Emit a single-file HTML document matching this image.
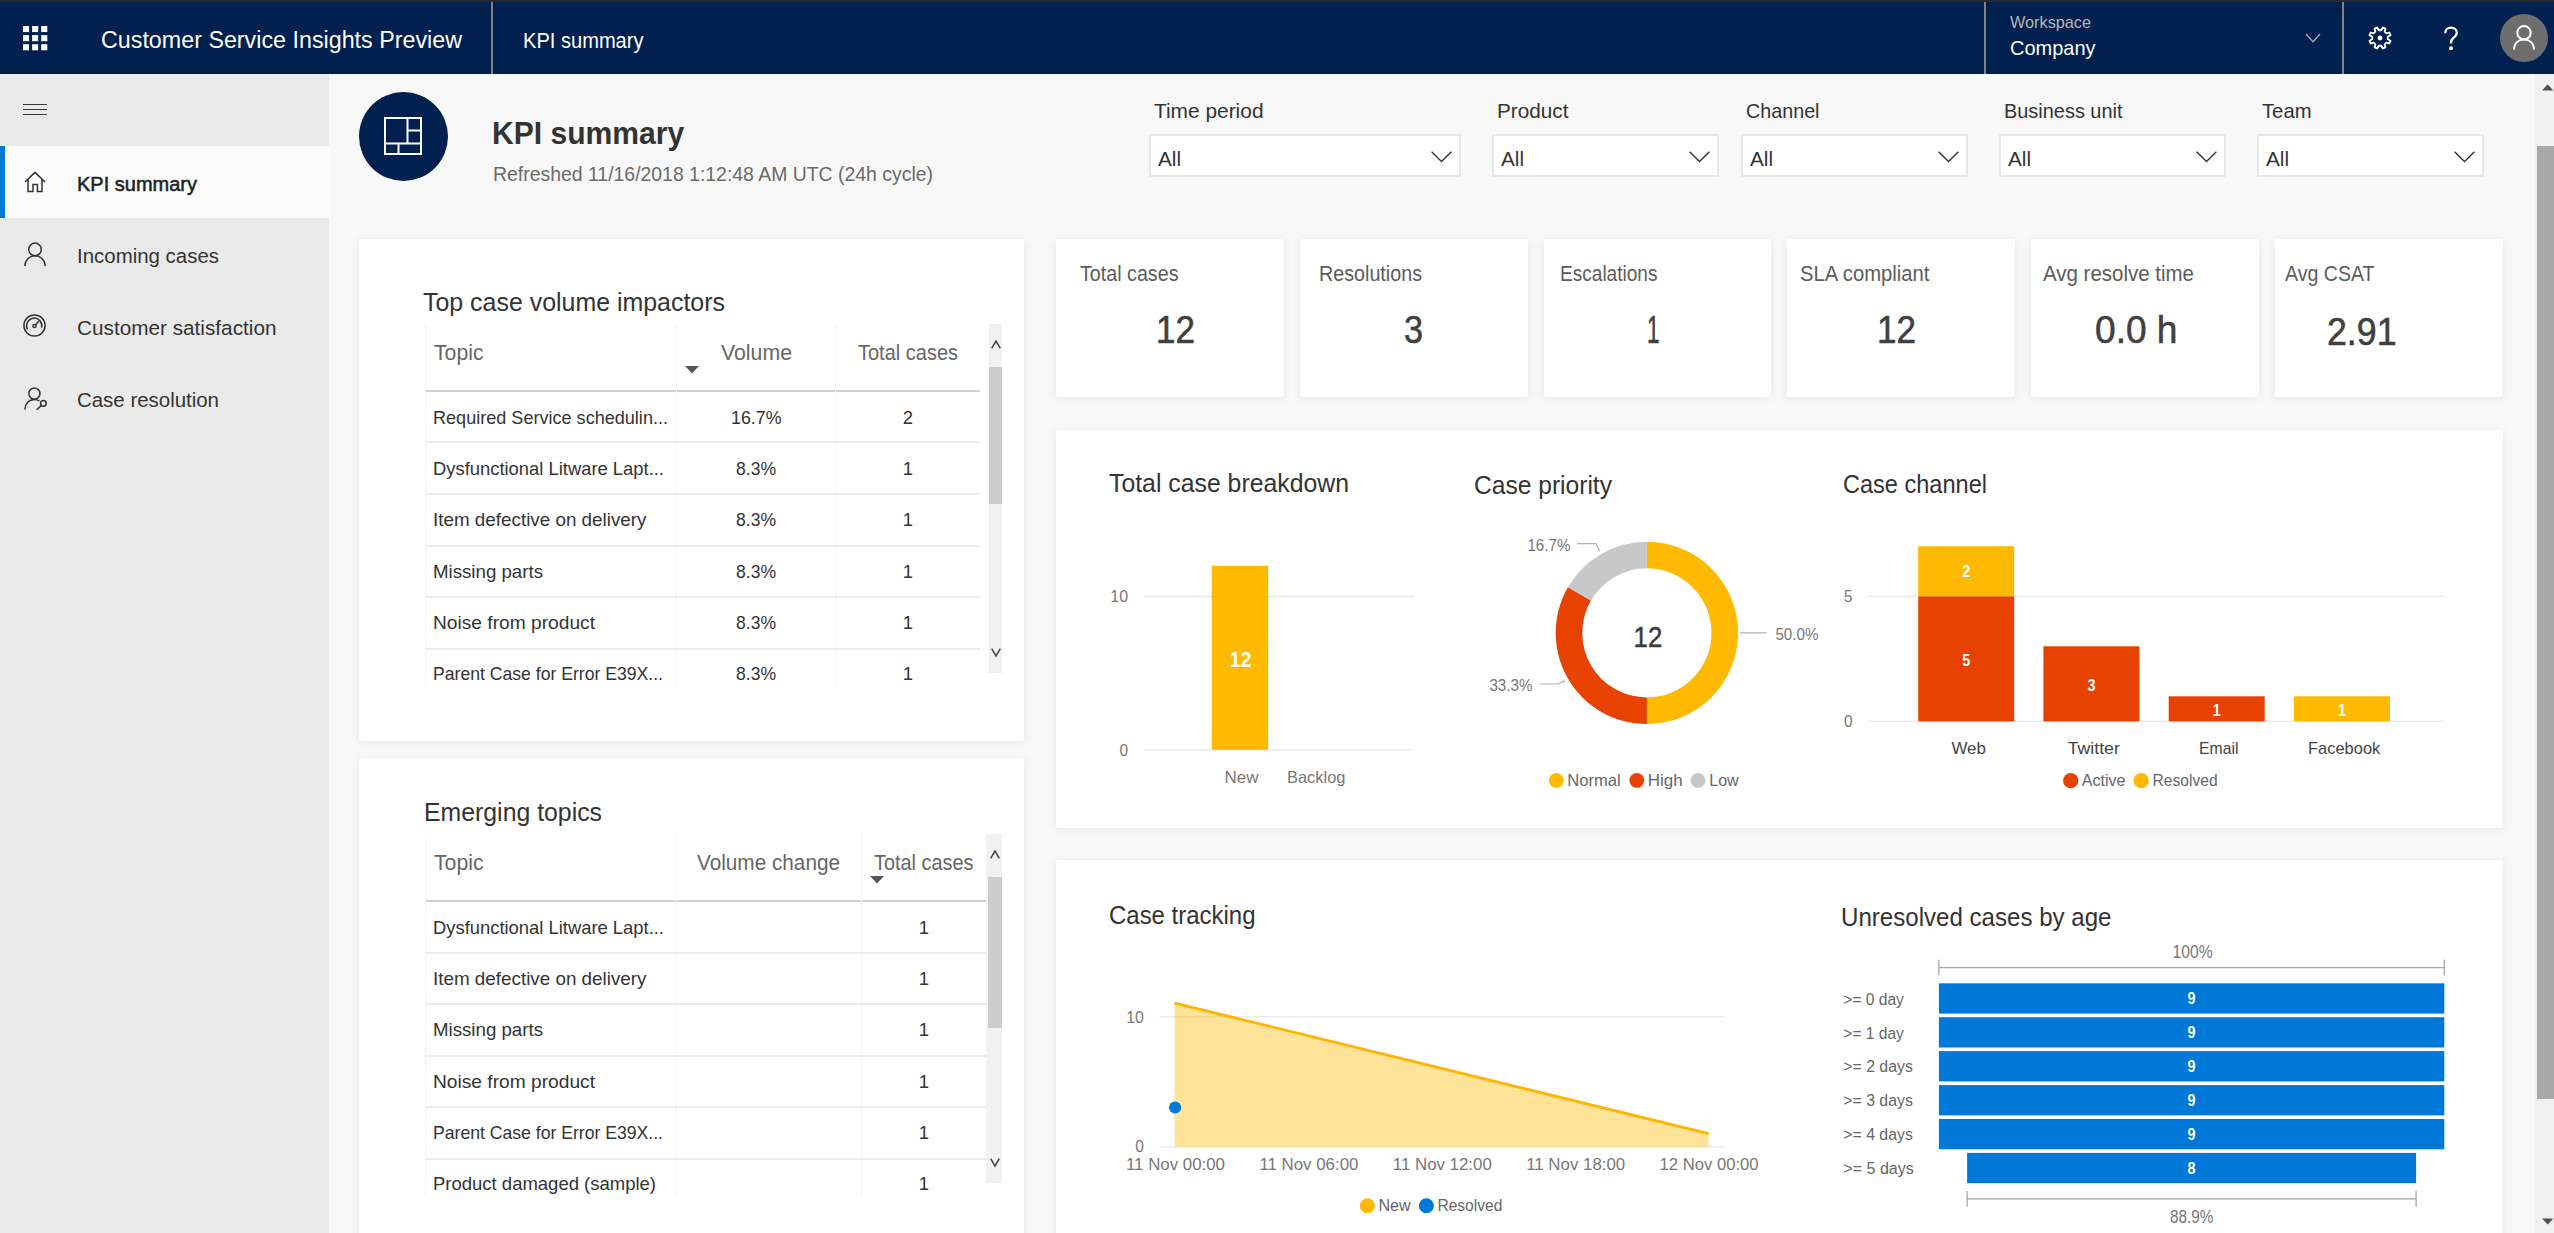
<!DOCTYPE html>
<html lang="en">
<head>
<meta charset="utf-8">
<title>Customer Service Insights Preview - KPI summary</title>
<style>
*{box-sizing:border-box;margin:0;padding:0}
html,body{width:2554px;height:1233px;overflow:hidden;background:#f8f8f8;font-family:"Liberation Sans",sans-serif}
#app{position:relative;width:2554px;height:1233px;overflow:hidden;background:#f8f8f8}
#app div,#app header,#app nav,#app main,#app section,#app svg,#app ul,#app li{position:absolute}
.t{position:absolute;white-space:nowrap;line-height:1;display:inline-block;transform-origin:0 50%;font-weight:400;margin:0}
.card{background:#fff;border-radius:2px;box-shadow:0 1px 9px rgba(0,0,0,.08)}
.dd{background:#fff;border:2px solid #e7e7e7;height:42px}
ul{list-style:none}
svg{overflow:visible}
svg text{font-family:"Liberation Sans",sans-serif}
.hl{background:#ececec}
.vl{background:#f3f3f3;width:1px}

</style>
</head>
<body>
<div id="app">
<main style="left:0;top:0">
<section style="left:0;top:0"><div style="left:359.0px;top:92.0px;width:89.0px;height:89.0px;background:#002050;border-radius:50%"></div>
<svg style="left:383.8px;top:117.0px" width="38" height="38" viewBox="0 0 38 38"><g fill="none" stroke="#fff" stroke-width="2"><rect x="1" y="1" width="36" height="36"/><path d="M1 26.5 H37 M23.5 1 V26.5 M23.5 13.5 H37 M14.5 26.5 V37"/></g></svg>
<h1 class="t" style="left:491.5px;top:118.0px;font-size:30.5px;font-weight:700;color:#333;transform:scaleX(0.9864);">KPI summary</h1>
<span class="t" style="left:493.0px;top:163.0px;font-size:21px;color:#6a6a6a;transform:scaleX(0.9246);">Refreshed 11/16/2018 1:12:48 AM UTC (24h cycle)</span>
<label class="t" style="left:1153.5px;top:100.0px;font-size:21px;color:#333;transform:scaleX(0.9945);">Time period</label>
<div class="dd" style="left:1149.0px;top:134.0px;width:312.0px;height:43.0px;"></div>
<span class="t" style="left:1158.4px;top:148.0px;font-size:21px;color:#333;transform:scaleX(0.9853);">All</span>
<svg style="left:1431.2px;top:151.0px" width="21" height="12" viewBox="0 0 21 12"><path d="M0.6 0.8 L10.5 10.6 L20.4 0.8" fill="none" stroke="#333" stroke-width="1.4"/></svg>
<label class="t" style="left:1497.0px;top:100.0px;font-size:21px;color:#333;transform:scaleX(0.9879);">Product</label>
<div class="dd" style="left:1492.0px;top:134.0px;width:227.0px;height:43.0px;"></div>
<span class="t" style="left:1501.4px;top:148.0px;font-size:21px;color:#333;transform:scaleX(0.9853);">All</span>
<svg style="left:1689.2px;top:151.0px" width="21" height="12" viewBox="0 0 21 12"><path d="M0.6 0.8 L10.5 10.6 L20.4 0.8" fill="none" stroke="#333" stroke-width="1.4"/></svg>
<label class="t" style="left:1746.0px;top:100.0px;font-size:21px;color:#333;transform:scaleX(0.9395);">Channel</label>
<div class="dd" style="left:1741.0px;top:134.0px;width:227.0px;height:43.0px;"></div>
<span class="t" style="left:1750.4px;top:148.0px;font-size:21px;color:#333;transform:scaleX(0.9853);">All</span>
<svg style="left:1938.2px;top:151.0px" width="21" height="12" viewBox="0 0 21 12"><path d="M0.6 0.8 L10.5 10.6 L20.4 0.8" fill="none" stroke="#333" stroke-width="1.4"/></svg>
<label class="t" style="left:2004.2px;top:100.0px;font-size:21px;color:#333;transform:scaleX(0.9487);">Business unit</label>
<div class="dd" style="left:1999.0px;top:134.0px;width:227.0px;height:43.0px;"></div>
<span class="t" style="left:2008.4px;top:148.0px;font-size:21px;color:#333;transform:scaleX(0.9853);">All</span>
<svg style="left:2196.2px;top:151.0px" width="21" height="12" viewBox="0 0 21 12"><path d="M0.6 0.8 L10.5 10.6 L20.4 0.8" fill="none" stroke="#333" stroke-width="1.4"/></svg>
<label class="t" style="left:2262.3px;top:100.0px;font-size:21px;color:#333;transform:scaleX(0.9638);">Team</label>
<div class="dd" style="left:2257.0px;top:134.0px;width:227.0px;height:43.0px;"></div>
<span class="t" style="left:2266.4px;top:148.0px;font-size:21px;color:#333;transform:scaleX(0.9853);">All</span>
<svg style="left:2454.2px;top:151.0px" width="21" height="12" viewBox="0 0 21 12"><path d="M0.6 0.8 L10.5 10.6 L20.4 0.8" fill="none" stroke="#333" stroke-width="1.4"/></svg></section>
<section style="left:0;top:0"><div class="card" style="left:359.3px;top:239.3px;width:664.8px;height:502.0px;"></div>
<h2 class="t" style="left:423.3px;top:290.0px;font-size:25px;color:#333;transform:scaleX(0.9970);">Top case volume impactors</h2>
<div style="left:425.4px;top:390.0px;width:554.9px;height:2.0px;background:#cfcfcf"></div>
<div class="vl" style="left:425.4px;top:324.2px;width:1.0px;height:363.5px;"></div>
<div class="vl" style="left:676.4px;top:324.2px;width:1.0px;height:363.5px;"></div>
<div class="vl" style="left:835.3px;top:324.2px;width:1.0px;height:363.5px;"></div>
<span class="t" style="left:433.5px;top:343.0px;font-size:21.5px;color:#666;transform:scaleX(0.9860);">Topic</span>
<span class="t" style="left:720.5px;top:343.0px;font-size:21.5px;color:#666;transform:scaleX(0.9900);">Volume</span>
<span class="t" style="left:857.8px;top:343.0px;font-size:21.5px;color:#666;transform:scaleX(0.9297);">Total cases</span>
<svg style="left:685.0px;top:366.0px" width="14" height="8" viewBox="0 0 14 8"><path d="M0 0 H14 L7 7.5 Z" fill="#555"/></svg>
<span class="t" style="left:433.2px;top:409.0px;font-size:18.5px;color:#333;transform:scaleX(0.9766);">Required Service schedulin...</span>
<span class="t" style="left:730.8px;top:409.0px;font-size:18.5px;color:#333;transform:scaleX(0.9625);">16.7%</span>
<span class="t" style="left:902.7px;top:409.0px;font-size:18.5px;color:#333;">2</span>
<span class="t" style="left:433.2px;top:460.0px;font-size:18.5px;color:#333;transform:scaleX(0.9939);">Dysfunctional Litware Lapt...</span>
<span class="t" style="left:736.0px;top:460.0px;font-size:18.5px;color:#333;transform:scaleX(0.9485);">8.3%</span>
<span class="t" style="left:902.7px;top:460.0px;font-size:18.5px;color:#333;">1</span>
<span class="t" style="left:433.2px;top:511.0px;font-size:18.5px;color:#333;transform:scaleX(1.0177);">Item defective on delivery</span>
<span class="t" style="left:736.0px;top:511.0px;font-size:18.5px;color:#333;transform:scaleX(0.9485);">8.3%</span>
<span class="t" style="left:902.7px;top:511.0px;font-size:18.5px;color:#333;">1</span>
<span class="t" style="left:433.2px;top:563.0px;font-size:18.5px;color:#333;transform:scaleX(1.0093);">Missing parts</span>
<span class="t" style="left:736.0px;top:563.0px;font-size:18.5px;color:#333;transform:scaleX(0.9485);">8.3%</span>
<span class="t" style="left:902.7px;top:563.0px;font-size:18.5px;color:#333;">1</span>
<span class="t" style="left:433.2px;top:614.0px;font-size:18.5px;color:#333;transform:scaleX(1.0365);">Noise from product</span>
<span class="t" style="left:736.0px;top:614.0px;font-size:18.5px;color:#333;transform:scaleX(0.9485);">8.3%</span>
<span class="t" style="left:902.7px;top:614.0px;font-size:18.5px;color:#333;">1</span>
<span class="t" style="left:433.2px;top:665.0px;font-size:18.5px;color:#333;transform:scaleX(0.9518);">Parent Case for Error E39X...</span>
<span class="t" style="left:736.0px;top:665.0px;font-size:18.5px;color:#333;transform:scaleX(0.9485);">8.3%</span>
<span class="t" style="left:902.7px;top:665.0px;font-size:18.5px;color:#333;">1</span>
<div class="hl" style="left:425.4px;top:441.0px;width:554.9px;height:2.0px;"></div>
<div class="hl" style="left:425.4px;top:493.0px;width:554.9px;height:2.0px;"></div>
<div class="hl" style="left:425.4px;top:545.0px;width:554.9px;height:2.0px;"></div>
<div class="hl" style="left:425.4px;top:596.0px;width:554.9px;height:2.0px;"></div>
<div class="hl" style="left:425.4px;top:648.0px;width:554.9px;height:2.0px;"></div>
<div style="left:988.6px;top:324.2px;width:13.6px;height:349.2px;background:#f1f1f1"></div>
<div style="left:988.6px;top:366.7px;width:13.6px;height:137.0px;background:#cdcdcd"></div>
<svg style="left:990.6px;top:339.6px" width="10" height="9" viewBox="0 0 10 9"><path d="M0.7 8.3 L5 1 L9.3 8.3" fill="none" stroke="#444" stroke-width="1.5"/></svg>
<svg style="left:990.6px;top:648.2px" width="10" height="9" viewBox="0 0 10 9"><path d="M0.7 0.7 L5 8 L9.3 0.7" fill="none" stroke="#444" stroke-width="1.5"/></svg>
<div class="card" style="left:359.3px;top:757.6px;width:664.8px;height:500.0px;"></div>
<h2 class="t" style="left:424.0px;top:800.0px;font-size:25px;color:#333;transform:scaleX(0.9930);">Emerging topics</h2>
<div style="left:425.2px;top:900.0px;width:561.2px;height:2.0px;background:#cfcfcf"></div>
<div class="vl" style="left:425.2px;top:834.3px;width:1.0px;height:363.0px;"></div>
<div class="vl" style="left:675.0px;top:834.3px;width:1.0px;height:363.0px;"></div>
<div class="vl" style="left:861.3px;top:834.3px;width:1.0px;height:363.0px;"></div>
<span class="t" style="left:433.5px;top:853.0px;font-size:21.5px;color:#666;transform:scaleX(0.9860);">Topic</span>
<span class="t" style="left:697.0px;top:853.0px;font-size:21.5px;color:#666;transform:scaleX(0.9647);">Volume change</span>
<span class="t" style="left:874.3px;top:853.0px;font-size:21.5px;color:#666;transform:scaleX(0.9250);">Total cases</span>
<svg style="left:869.7px;top:876.3px" width="14" height="8" viewBox="0 0 14 8"><path d="M0 0 H14 L7 7.5 Z" fill="#555"/></svg>
<span class="t" style="left:433.2px;top:919.0px;font-size:18.5px;color:#333;transform:scaleX(0.9939);">Dysfunctional Litware Lapt...</span>
<span class="t" style="left:918.7px;top:919.0px;font-size:18.5px;color:#333;">1</span>
<span class="t" style="left:433.2px;top:970.0px;font-size:18.5px;color:#333;transform:scaleX(1.0177);">Item defective on delivery</span>
<span class="t" style="left:918.7px;top:970.0px;font-size:18.5px;color:#333;">1</span>
<span class="t" style="left:433.2px;top:1021.0px;font-size:18.5px;color:#333;transform:scaleX(1.0093);">Missing parts</span>
<span class="t" style="left:918.7px;top:1021.0px;font-size:18.5px;color:#333;">1</span>
<span class="t" style="left:433.2px;top:1073.0px;font-size:18.5px;color:#333;transform:scaleX(1.0365);">Noise from product</span>
<span class="t" style="left:918.7px;top:1073.0px;font-size:18.5px;color:#333;">1</span>
<span class="t" style="left:433.2px;top:1124.0px;font-size:18.5px;color:#333;transform:scaleX(0.9518);">Parent Case for Error E39X...</span>
<span class="t" style="left:918.7px;top:1124.0px;font-size:18.5px;color:#333;">1</span>
<span class="t" style="left:433.2px;top:1175.0px;font-size:18.5px;color:#333;transform:scaleX(0.9994);">Product damaged (sample)</span>
<span class="t" style="left:918.7px;top:1175.0px;font-size:18.5px;color:#333;">1</span>
<div class="hl" style="left:425.2px;top:952.0px;width:561.2px;height:2.0px;"></div>
<div class="hl" style="left:425.2px;top:1003.0px;width:561.2px;height:2.0px;"></div>
<div class="hl" style="left:425.2px;top:1055.0px;width:561.2px;height:2.0px;"></div>
<div class="hl" style="left:425.2px;top:1106.0px;width:561.2px;height:2.0px;"></div>
<div class="hl" style="left:425.2px;top:1158.0px;width:561.2px;height:2.0px;"></div>
<div style="left:986.4px;top:834.3px;width:15.6px;height:349.0px;background:#f1f1f1"></div>
<div style="left:988.0px;top:877.0px;width:14.0px;height:150.8px;background:#cdcdcd"></div>
<svg style="left:990.0px;top:849.9px" width="10" height="9" viewBox="0 0 10 9"><path d="M0.7 8.3 L5 1 L9.3 8.3" fill="none" stroke="#444" stroke-width="1.5"/></svg>
<svg style="left:990.0px;top:1158.4px" width="10" height="9" viewBox="0 0 10 9"><path d="M0.7 0.7 L5 8 L9.3 0.7" fill="none" stroke="#444" stroke-width="1.5"/></svg></section>
<section style="left:0;top:0"><div class="card" style="left:1056.0px;top:239.4px;width:227.8px;height:157.8px;"></div>
<span class="t" style="left:1079.7px;top:263.0px;font-size:22.5px;color:#5c5c5c;transform:scaleX(0.8751);">Total cases</span>
<span class="t" style="left:1155.5px;top:310.0px;font-size:39.5px;color:#404040;transform:scaleX(0.8876);-webkit-text-stroke:0.6px #404040;">12</span>
<div class="card" style="left:1299.8px;top:239.4px;width:227.8px;height:157.8px;"></div>
<span class="t" style="left:1319.4px;top:263.0px;font-size:22.5px;color:#5c5c5c;transform:scaleX(0.8760);">Resolutions</span>
<span class="t" style="left:1404.0px;top:310.0px;font-size:39.5px;color:#404040;transform:scaleX(0.8649);-webkit-text-stroke:0.6px #404040;">3</span>
<div class="card" style="left:1543.5px;top:239.4px;width:227.8px;height:157.8px;"></div>
<span class="t" style="left:1559.8px;top:263.0px;font-size:22.5px;color:#5c5c5c;transform:scaleX(0.8474);">Escalations</span>
<span class="t" style="left:1646.5px;top:310.0px;font-size:39.5px;color:#404040;transform:scaleX(0.5690);-webkit-text-stroke:0.6px #404040;">1</span>
<div class="card" style="left:1787.2px;top:239.4px;width:227.8px;height:157.8px;"></div>
<span class="t" style="left:1799.5px;top:263.0px;font-size:22.5px;color:#5c5c5c;transform:scaleX(0.9003);">SLA compliant</span>
<span class="t" style="left:1877.0px;top:310.0px;font-size:39.5px;color:#404040;transform:scaleX(0.8876);-webkit-text-stroke:0.6px #404040;">12</span>
<div class="card" style="left:2031.0px;top:239.4px;width:227.8px;height:157.8px;"></div>
<span class="t" style="left:2042.9px;top:263.0px;font-size:22.5px;color:#5c5c5c;transform:scaleX(0.9102);">Avg resolve time</span>
<span class="t" style="left:2095.2px;top:310.0px;font-size:39.5px;color:#404040;transform:scaleX(0.9390);-webkit-text-stroke:0.6px #404040;">0.0 h</span>
<div class="card" style="left:2274.8px;top:239.4px;width:227.8px;height:157.8px;"></div>
<span class="t" style="left:2284.5px;top:263.0px;font-size:22.5px;color:#5c5c5c;transform:scaleX(0.8693);">Avg CSAT</span>
<span class="t" style="left:2327.0px;top:312.0px;font-size:39.5px;color:#404040;transform:scaleX(0.9039);-webkit-text-stroke:0.6px #404040;">2.91</span></section>
<section style="left:0;top:0"><div class="card" style="left:1055.7px;top:429.5px;width:1447.0px;height:398.6px;"></div>
<h2 class="t" style="left:1109.0px;top:471.0px;font-size:25px;color:#333;transform:scaleX(0.9925);">Total case breakdown</h2>
<h2 class="t" style="left:1474.0px;top:473.0px;font-size:25px;color:#333;transform:scaleX(0.9834);">Case priority</h2>
<h2 class="t" style="left:1842.6px;top:472.0px;font-size:25px;color:#333;transform:scaleX(0.9418);">Case channel</h2>
<svg style="left:0;top:0" width="2554" height="1233" viewBox="0 0 2554 1233"><path d="M1144.2 596.5 H1413.7 M1144.2 749.8 H1413.7" stroke="#e8e8e8" stroke-width="1.3" fill="none"/><rect x="1211.7" y="565.8" width="56.5" height="184" fill="#FFB900"/><text x="1110.3" y="602.3" font-size="16" fill="#777" textLength="17.8" lengthAdjust="spacingAndGlyphs">10</text><text x="1119.5" y="755.6" font-size="16" fill="#777" textLength="8.6" lengthAdjust="spacingAndGlyphs">0</text><text x="1229.6" y="666.9" font-size="21.5" fill="#fff" font-weight="700" textLength="22.0" lengthAdjust="spacingAndGlyphs">12</text><text x="1224.6" y="782.8" font-size="16.5" fill="#777" textLength="34.0" lengthAdjust="spacingAndGlyphs">New</text><text x="1287.0" y="782.8" font-size="16.5" fill="#777" textLength="58.5" lengthAdjust="spacingAndGlyphs">Backlog</text></svg>
<svg style="left:0;top:0" width="2554" height="1233" viewBox="0 0 2554 1233"><path d="M1646.90 541.70 A91.2 91.2 0 0 1 1646.90 724.10 L1646.90 697.50 A64.6 64.6 0 0 0 1646.90 568.30 Z" fill="#FFB900"/><path d="M1646.90 724.10 A91.2 91.2 0 0 1 1567.92 587.30 L1590.95 600.60 A64.6 64.6 0 0 0 1646.90 697.50 Z" fill="#E84200"/><path d="M1567.92 587.30 A91.2 91.2 0 0 1 1646.90 541.70 L1646.90 568.30 A64.6 64.6 0 0 0 1590.95 600.60 Z" fill="#C8C8C8"/><text stroke="#3d3d3d" stroke-width="0.5" x="1633.6" y="647.3" font-size="28.8" fill="#3d3d3d" textLength="28.6" lengthAdjust="spacingAndGlyphs">12</text><path d="M1577.2 543.7 H1596 L1599.7 551.2 M1539.8 684 H1557.8 L1565 680.6 M1740.1 632.9 H1766.7" stroke="#b0b0b0" stroke-width="1.2" fill="none"/><text x="1527.4" y="551.2" font-size="16" fill="#777" textLength="43.0" lengthAdjust="spacingAndGlyphs">16.7%</text><text x="1489.4" y="690.8" font-size="16" fill="#777" textLength="43.0" lengthAdjust="spacingAndGlyphs">33.3%</text><text x="1775.4" y="640.0" font-size="16" fill="#777" textLength="43.0" lengthAdjust="spacingAndGlyphs">50.0%</text><circle cx="1556.3" cy="780.4" r="7.4" fill="#FFB900"/><text x="1567.2" y="786.2" font-size="16.5" fill="#666" textLength="53.5" lengthAdjust="spacingAndGlyphs">Normal</text><circle cx="1636.8" cy="780.4" r="7.4" fill="#E84200"/><text x="1647.8" y="786.2" font-size="16.5" fill="#666" textLength="34.8" lengthAdjust="spacingAndGlyphs">High</text><circle cx="1698" cy="780.4" r="7.4" fill="#C8C8C8"/><text x="1709.2" y="786.2" font-size="16.5" fill="#666" textLength="29.5" lengthAdjust="spacingAndGlyphs">Low</text></svg>
<svg style="left:0;top:0" width="2554" height="1233" viewBox="0 0 2554 1233"><path d="M1868.1 596.3 H2443.7 M1868.1 721.4 H2443.7" stroke="#e8e8e8" stroke-width="1.3" fill="none"/><text x="1844.0" y="602.2" font-size="16" fill="#777" textLength="8.4" lengthAdjust="spacingAndGlyphs">5</text><text x="1844.0" y="727.0" font-size="16" fill="#777" textLength="8.6" lengthAdjust="spacingAndGlyphs">0</text><rect x="1918.2" y="546.2" width="96" height="50.2" fill="#FFB900"/><rect x="1918.2" y="596.4" width="96" height="125" fill="#E84200"/><rect x="2043.4" y="646.3" width="96" height="75.1" fill="#E84200"/><rect x="2168.7" y="696.3" width="96" height="25.1" fill="#E84200"/><rect x="2293.9" y="696.3" width="96" height="25.1" fill="#FFB900"/><text x="1962.2" y="577.3" font-size="16" fill="#fff" font-weight="700" textLength="8.0" lengthAdjust="spacingAndGlyphs">2</text><text x="1962.2" y="665.5" font-size="16" fill="#fff" font-weight="700" textLength="8.0" lengthAdjust="spacingAndGlyphs">5</text><text x="2087.4" y="690.6" font-size="16" fill="#fff" font-weight="700" textLength="8.0" lengthAdjust="spacingAndGlyphs">3</text><text x="2212.7" y="715.5" font-size="16" fill="#fff" font-weight="700" textLength="8.0" lengthAdjust="spacingAndGlyphs">1</text><text x="2337.9" y="715.5" font-size="16" fill="#fff" font-weight="700" textLength="8.0" lengthAdjust="spacingAndGlyphs">1</text><text x="1951.4" y="753.8" font-size="17" fill="#444" textLength="34.5" lengthAdjust="spacingAndGlyphs">Web</text><text x="2067.8" y="753.8" font-size="17" fill="#444" textLength="52.0" lengthAdjust="spacingAndGlyphs">Twitter</text><text x="2199.0" y="753.8" font-size="17" fill="#444" textLength="39.5" lengthAdjust="spacingAndGlyphs">Email</text><text x="2308.0" y="753.8" font-size="17" fill="#444" textLength="72.3" lengthAdjust="spacingAndGlyphs">Facebook</text><circle cx="2070.7" cy="780.7" r="7.6" fill="#E84200"/><text x="2081.8" y="786.4" font-size="16.5" fill="#666" textLength="43.6" lengthAdjust="spacingAndGlyphs">Active</text><circle cx="2141.2" cy="780.7" r="7.6" fill="#FFB900"/><text x="2152.6" y="786.4" font-size="16.5" fill="#666" textLength="65.0" lengthAdjust="spacingAndGlyphs">Resolved</text></svg></section>
<section style="left:0;top:0"><div class="card" style="left:1055.7px;top:860.3px;width:1447.0px;height:400.0px;"></div>
<h2 class="t" style="left:1109.3px;top:903.0px;font-size:25px;color:#333;transform:scaleX(0.9584);">Case tracking</h2>
<h2 class="t" style="left:1840.8px;top:905.0px;font-size:25px;color:#333;transform:scaleX(0.9636);">Unresolved cases by age</h2>
<svg style="left:0;top:0" width="2554" height="1233" viewBox="0 0 2554 1233"><path d="M1159.6 1016.8 H1724 M1159.6 1146.8 H1724" stroke="#e8e8e8" stroke-width="1.3" fill="none"/><path d="M1174.6 1003.1 L1708.8 1133.6 V1146.8 H1174.6 Z" fill="#FFB900" fill-opacity="0.4"/><path d="M1174.6 1003.1 L1708.8 1133.6" stroke="#FFB400" stroke-width="2.8" fill="none"/><circle cx="1175.1" cy="1107.5" r="6.1" fill="#0078D7"/><text x="1126.2" y="1022.6" font-size="16" fill="#777" textLength="17.6" lengthAdjust="spacingAndGlyphs">10</text><text x="1135.2" y="1151.8" font-size="16" fill="#777" textLength="8.6" lengthAdjust="spacingAndGlyphs">0</text><text x="1126.0" y="1170.0" font-size="16.5" fill="#777" textLength="99.0" lengthAdjust="spacingAndGlyphs">11 Nov 00:00</text><text x="1259.4" y="1170.0" font-size="16.5" fill="#777" textLength="99.0" lengthAdjust="spacingAndGlyphs">11 Nov 06:00</text><text x="1392.8" y="1170.0" font-size="16.5" fill="#777" textLength="99.0" lengthAdjust="spacingAndGlyphs">11 Nov 12:00</text><text x="1526.2" y="1170.0" font-size="16.5" fill="#777" textLength="99.0" lengthAdjust="spacingAndGlyphs">11 Nov 18:00</text><text x="1659.6" y="1170.0" font-size="16.5" fill="#777" textLength="99.0" lengthAdjust="spacingAndGlyphs">12 Nov 00:00</text><circle cx="1367.4" cy="1205.7" r="7.5" fill="#FFB900"/><text x="1378.4" y="1211.4" font-size="16.5" fill="#666" textLength="32.2" lengthAdjust="spacingAndGlyphs">New</text><circle cx="1426.4" cy="1205.7" r="7.5" fill="#0078D7"/><text x="1437.4" y="1211.4" font-size="16.5" fill="#666" textLength="65.0" lengthAdjust="spacingAndGlyphs">Resolved</text></svg>
<svg style="left:0;top:0" width="2554" height="1233" viewBox="0 0 2554 1233"><path d="M1938.9 967.7 H2444.3 M1938.9 959.7 V975.5 M2444.3 959.7 V975.5 M1967.1 1198.9 H2416.1 M1967.1 1191.1 V1206.7 M2416.1 1191.1 V1206.7" stroke="#a6a6a6" stroke-width="1.3" fill="none"/><text x="2172.6" y="957.6" font-size="17.5" fill="#777" textLength="40.0" lengthAdjust="spacingAndGlyphs">100%</text><text x="2170.0" y="1222.6" font-size="17.5" fill="#777" textLength="43.4" lengthAdjust="spacingAndGlyphs">88.9%</text><rect x="1938.9" y="983.3" width="505.4" height="30.3" fill="#0078D7"/><text x="2187.5" y="1004.1" font-size="16" fill="#fff" font-weight="700" textLength="8.0" lengthAdjust="spacingAndGlyphs">9</text><text x="1843.3" y="1004.6" font-size="16" fill="#666" textLength="60.6" lengthAdjust="spacingAndGlyphs">&gt;= 0 day</text><rect x="1938.9" y="1017.2" width="505.4" height="30.3" fill="#0078D7"/><text x="2187.5" y="1038.0" font-size="16" fill="#fff" font-weight="700" textLength="8.0" lengthAdjust="spacingAndGlyphs">9</text><text x="1843.3" y="1038.5" font-size="16" fill="#666" textLength="60.6" lengthAdjust="spacingAndGlyphs">&gt;= 1 day</text><rect x="1938.9" y="1051.1" width="505.4" height="30.3" fill="#0078D7"/><text x="2187.5" y="1071.9" font-size="16" fill="#fff" font-weight="700" textLength="8.0" lengthAdjust="spacingAndGlyphs">9</text><text x="1843.3" y="1072.4" font-size="16" fill="#666" textLength="69.5" lengthAdjust="spacingAndGlyphs">&gt;= 2 days</text><rect x="1938.9" y="1085.1" width="505.4" height="30.3" fill="#0078D7"/><text x="2187.5" y="1105.9" font-size="16" fill="#fff" font-weight="700" textLength="8.0" lengthAdjust="spacingAndGlyphs">9</text><text x="1843.3" y="1106.4" font-size="16" fill="#666" textLength="69.5" lengthAdjust="spacingAndGlyphs">&gt;= 3 days</text><rect x="1938.9" y="1119.0" width="505.4" height="30.3" fill="#0078D7"/><text x="2187.5" y="1139.8" font-size="16" fill="#fff" font-weight="700" textLength="8.0" lengthAdjust="spacingAndGlyphs">9</text><text x="1843.3" y="1140.3" font-size="16" fill="#666" textLength="69.5" lengthAdjust="spacingAndGlyphs">&gt;= 4 days</text><rect x="1967.1" y="1152.9" width="449" height="30.3" fill="#0078D7"/><text x="2187.5" y="1173.7" font-size="16" fill="#fff" font-weight="700" textLength="8.0" lengthAdjust="spacingAndGlyphs">8</text><text x="1843.3" y="1174.2" font-size="16" fill="#666" textLength="70.5" lengthAdjust="spacingAndGlyphs">&gt;= 5 days</text></svg></section>
</main>
<nav class="side" style="left:0;top:0"><div style="left:0.0px;top:74.0px;width:329.0px;height:1159.0px;background:#eaeaea"></div>
<svg style="left:23.0px;top:103.0px" width="24" height="13" viewBox="0 0 24 13"><path d="M0 1.5H24M0 6.5H24M0 11.5H24" stroke="#3a3a3a" stroke-width="1" fill="none"/></svg>
<div style="left:0.0px;top:146.0px;width:329.0px;height:72.0px;background:#fbfbfb"></div>
<div style="left:0.0px;top:146.0px;width:5.0px;height:72.0px;background:#0078d4"></div>
<ul style="left:0;top:0"><li style="left:0;top:0">
<svg style="left:24.0px;top:171.0px" width="22" height="22" viewBox="0 0 22 22"><path d="M1 11 L11 1.4 L21 11 M4 8.6 V20.6 H9 V13.6 H13.4 V20.6 H18 V8.6" fill="none" stroke="#333" stroke-width="1.5" stroke-linejoin="miter"/></svg>
<span class="t" style="left:77.4px;top:174.0px;font-size:20.5px;color:#222;transform:scaleX(0.9754);-webkit-text-stroke:0.55px #222;">KPI summary</span>
</li><li style="left:0;top:0">
<svg style="left:24.0px;top:241.5px" width="22" height="25" viewBox="0 0 22 25"><circle cx="11" cy="7.4" r="6.3" fill="none" stroke="#333" stroke-width="1.5"/><path d="M0.8 24 C1.2 17.6 5.6 13.8 11 13.8 C16.4 13.8 20.8 17.6 21.2 24" fill="none" stroke="#333" stroke-width="1.5"/></svg>
<span class="t" style="left:77.0px;top:246.0px;font-size:20.5px;color:#333;transform:scaleX(0.9969);">Incoming cases</span>
</li><li style="left:0;top:0">
<svg style="left:23.0px;top:313.5px" width="23" height="23" viewBox="0 0 23 23"><circle cx="11.5" cy="11.5" r="10.6" fill="none" stroke="#333" stroke-width="1.5"/><path d="M4.6 15.4 A7.6 7.6 0 1 1 18.6 13.6" fill="none" stroke="#333" stroke-width="1.5"/><circle cx="11.5" cy="12" r="1.6" fill="none" stroke="#333" stroke-width="1.5" stroke-width="1.2"/><path d="M12.6 10.8 L16 7" fill="none" stroke="#333" stroke-width="1.5"/></svg>
<span class="t" style="left:77.0px;top:318.0px;font-size:20.5px;color:#333;transform:scaleX(1.0121);">Customer satisfaction</span>
</li><li style="left:0;top:0">
<svg style="left:24.0px;top:387.0px" width="24" height="24" viewBox="0 0 24 24"><circle cx="10.4" cy="6.6" r="5.6" fill="none" stroke="#333" stroke-width="1.5"/><path d="M0.8 22.6 C1.2 16.4 5 12.4 10.4 12.4 C12.4 12.4 14 12.9 15.4 13.8" fill="none" stroke="#333" stroke-width="1.5"/><circle cx="19.4" cy="16.4" r="2.8" fill="none" stroke="#333" stroke-width="1.5"/><path d="M17.4 18.4 L12.6 22.8" fill="none" stroke="#333" stroke-width="1.5"/></svg>
<span class="t" style="left:77.0px;top:390.0px;font-size:20.5px;color:#333;transform:scaleX(0.9968);">Case resolution</span>
</li></ul></nav>
<header class="top" style="left:0;top:0"><div style="left:0.0px;top:0.0px;width:2554.0px;height:74.0px;background:#002050"></div>
<div style="left:0.0px;top:0.0px;width:2554.0px;height:2.0px;background:#2a2a2a"></div>
<svg style="left:22.9px;top:25.9px" width="24.3" height="24.3" viewBox="0 0 24 24"><g fill="#fff"><rect x="0" y="0" width="6" height="6"/><rect x="0" y="9" width="6" height="6"/><rect x="0" y="18" width="6" height="6"/><rect x="9" y="0" width="6" height="6"/><rect x="9" y="9" width="6" height="6"/><rect x="9" y="18" width="6" height="6"/><rect x="18" y="0" width="6" height="6"/><rect x="18" y="9" width="6" height="6"/><rect x="18" y="18" width="6" height="6"/></g></svg>
<span class="t" style="left:100.8px;top:29.0px;font-size:23.5px;color:#fff;transform:scaleX(0.9907);">Customer Service Insights Preview</span>
<div style="left:491.2px;top:2.0px;width:1.8px;height:72.0px;background:#85827e"></div>
<span class="t" style="left:523.0px;top:30.0px;font-size:22px;color:#fff;transform:scaleX(0.9127);">KPI summary</span>
<div style="left:1984.1px;top:2.0px;width:1.8px;height:72.0px;background:#85827e"></div>
<span class="t" style="left:2009.6px;top:14.0px;font-size:17px;color:#b9b6b2;transform:scaleX(0.9561);">Workspace</span>
<span class="t" style="left:2009.6px;top:37.0px;font-size:21px;color:#fff;transform:scaleX(0.9512);">Company</span>
<svg style="left:2305.0px;top:33.0px" width="16" height="10" viewBox="0 0 16 10"><path d="M1 1 L8 8.6 L15 1" fill="none" stroke="#a9a7a4" stroke-width="1.4"/></svg>
<div style="left:2342.0px;top:2.0px;width:1.9px;height:72.0px;background:#85827e"></div>
<svg style="left:2368.0px;top:26.0px" width="24" height="24" viewBox="0 0 24 24"><polygon points="13.24,4.20 14.77,1.56 17.42,2.66 16.64,5.61 18.39,7.36 21.34,6.58 22.44,9.23 19.80,10.76 19.80,13.24 22.44,14.77 21.34,17.42 18.39,16.64 16.64,18.39 17.42,21.34 14.77,22.44 13.24,19.80 10.76,19.80 9.23,22.44 6.58,21.34 7.36,18.39 5.61,16.64 2.66,17.42 1.56,14.77 4.20,13.24 4.20,10.76 1.56,9.23 2.66,6.58 5.61,7.36 7.36,5.61 6.58,2.66 9.23,1.56 10.76,4.20" fill="none" stroke="#fff" stroke-width="1.9" stroke-linejoin="round"/><circle cx="12" cy="12" r="2.4" fill="#fff"/></svg>
<svg style="left:2443.0px;top:26.0px" width="16" height="25" viewBox="0 0 16 25"><path d="M2.2 7.2 C2.2 3.6 4.8 1.6 8 1.6 C11.4 1.6 13.8 3.8 13.8 6.8 C13.8 9.4 12.2 10.6 10.4 12 C8.9 13.2 8 14.2 8 16.6 L8 17.4" fill="none" stroke="#fff" stroke-width="2.3"/><circle cx="8" cy="22.2" r="2" fill="#fff"/></svg>
<div style="left:2500.0px;top:14.0px;width:48.0px;height:48.0px;background:#6e6e6e;border-radius:50%"></div>
<svg style="left:2512.0px;top:25.0px" width="24" height="26" viewBox="0 0 24 26"><circle cx="12" cy="7.8" r="6.7" fill="none" stroke="#fff" stroke-width="2"/><path d="M1.9 24.6 C2.4 18 6.6 14.5 12 14.5 C17.4 14.5 21.6 18 22.1 24.6" fill="none" stroke="#fff" stroke-width="2"/></svg></header>
<div style="left:0;top:0"><div style="left:2535.0px;top:74.0px;width:19.0px;height:1159.0px;background:#f0f0f0"></div>
<div style="left:2537.0px;top:146.0px;width:17.0px;height:952.5px;background:#a8a8a8"></div>
<svg style="left:2541.8px;top:83.6px" width="12" height="7" viewBox="0 0 12 7"><path d="M0 6.4 H11.4 L5.7 0.2 Z" fill="#505050"/></svg>
<svg style="left:2541.8px;top:1217.6px" width="12" height="7" viewBox="0 0 12 7"><path d="M0 0.4 H11.4 L5.7 6.6 Z" fill="#505050"/></svg></div>
</div>
</body>
</html>
